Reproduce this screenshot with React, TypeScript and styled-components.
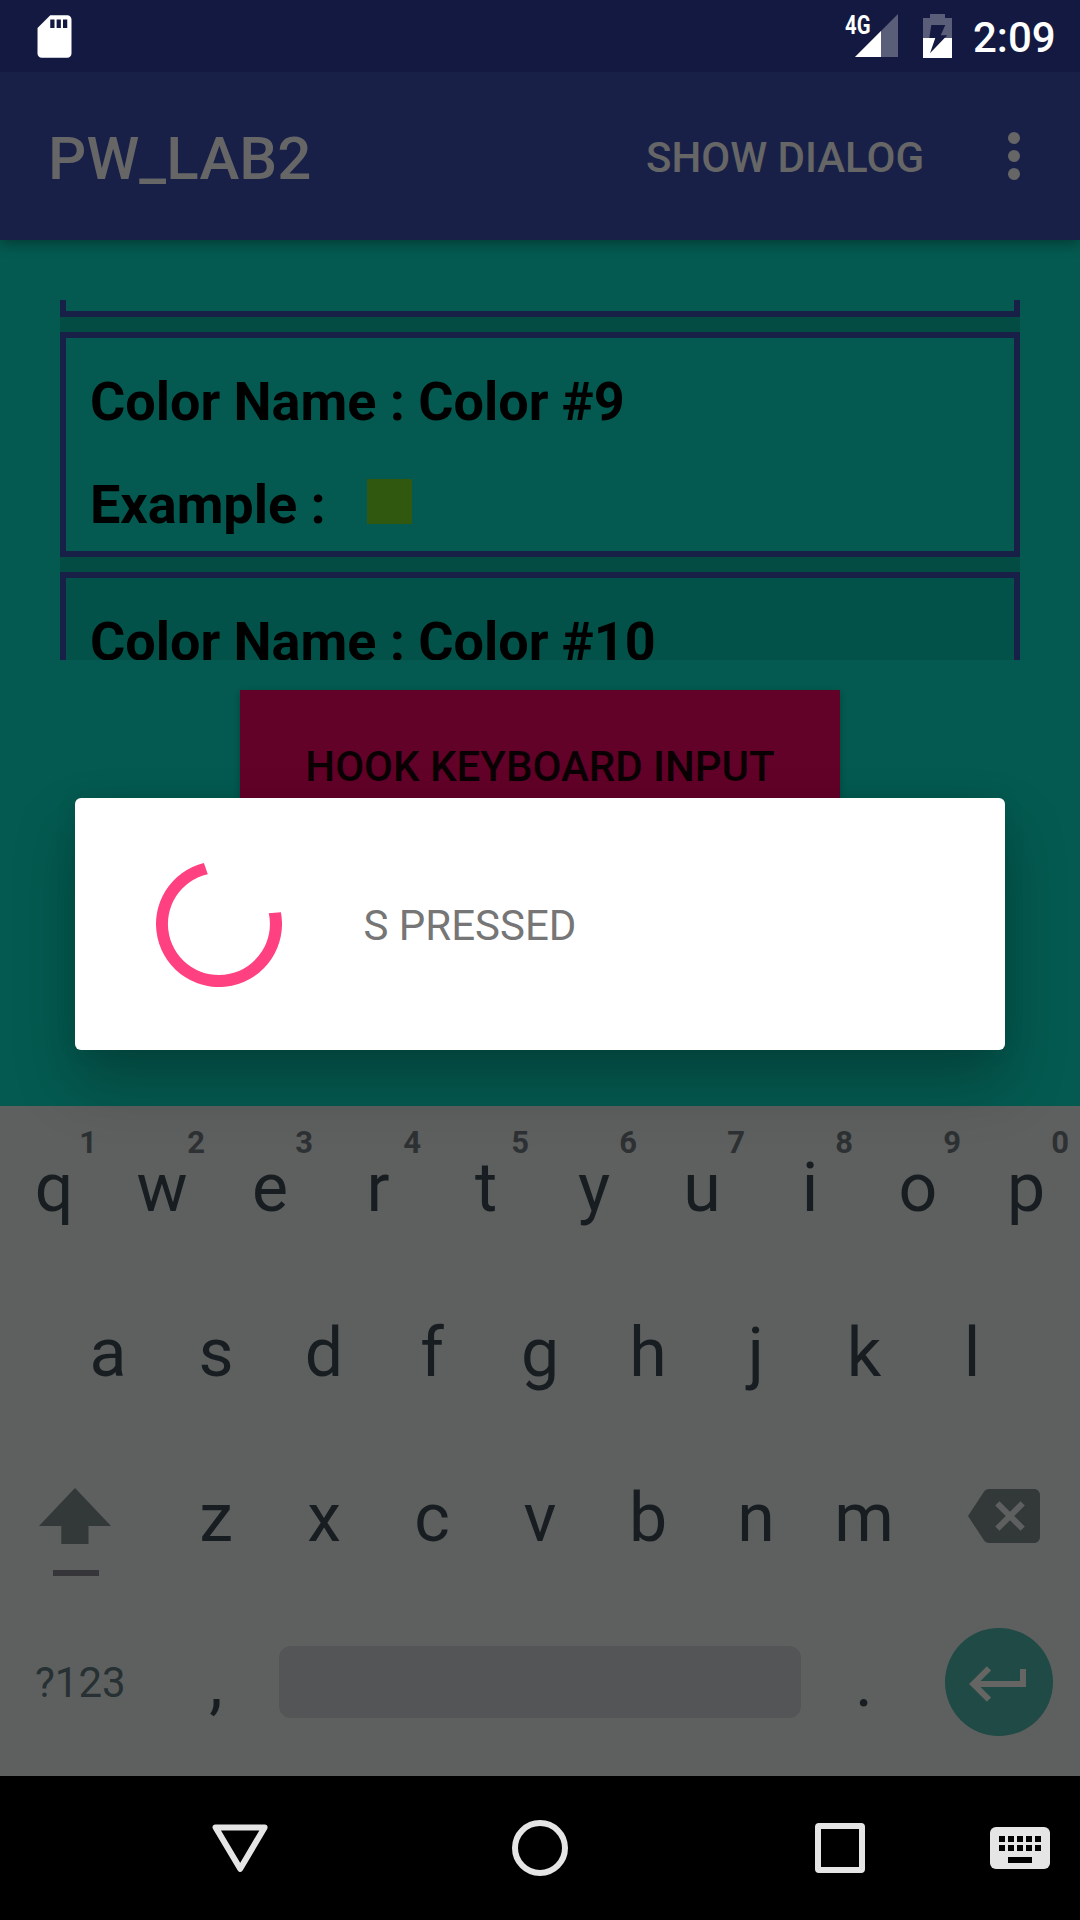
import React from "react";
import styled, { createGlobalStyle } from "styled-components";

const GlobalStyle = createGlobalStyle`
  *, *::before, *::after { box-sizing: border-box; }
  html, body { margin: 0; padding: 0; background: #000; }
  body { font-family: Roboto, "Liberation Sans", sans-serif; }
`;

const Screen = styled.div`
  position: relative;
  display: flex;
  flex-direction: column;
  width: 1080px;
  height: 1920px;
  overflow: hidden;
`;

const StatusBar = styled.header`
  display: flex;
  align-items: flex-start;
  justify-content: space-between;
  height: 72px;
  padding: 0 25px 0 28.5px;
  background: #131940;
  color: #fff;
`;

const SdIcon = styled.svg`
  width: 51px;
  height: 51px;
  margin-top: 10.5px;
`;

const StatusRight = styled.div`
  display: flex;
  align-items: flex-start;
`;

const NetworkType = styled.span`
  width: 26px;
  margin: 10px -16px 0 0;
  font-size: 26px;
  line-height: 30px;
  font-weight: 700;
  transform: scaleX(0.78);
  transform-origin: left;
`;

const SignalIcon = styled.svg`
  width: 43px;
  height: 43px;
  margin: 14px 25px 0 0;
`;

const BatteryIcon = styled.svg`
  width: 29px;
  height: 44px;
  margin: 14px 21px 0 0;
`;

const Clock = styled.span`
  width: 82px;
  margin-top: 13px;
  font-size: 42px;
  line-height: 50px;
  font-weight: 500;
  white-space: nowrap;
`;

const Toolbar = styled.div`
  position: relative;
  z-index: 1;
  display: flex;
  align-items: center;
  height: 168px;
  padding: 0 48px;
  background: #192048;
  color: #666;
  box-shadow: 0 4px 12px rgba(0, 0, 0, 0.32);
  clip-path: inset(0 0 -30px 0);
`;

const Title = styled.h1`
  flex: 1;
  margin: 0;
  padding-top: 5px;
  font-size: 60px;
  line-height: 70px;
  font-weight: 500;
  letter-spacing: 0.12px;
`;

const MenuAction = styled.span`
  padding-top: 4px;
  font-size: 42px;
  line-height: 50px;
  font-weight: 500;
`;

const OverflowIcon = styled.svg`
  width: 12px;
  height: 48px;
  margin: 0 12px 0 84px;
`;

const Content = styled.main`
  display: flex;
  flex-direction: column;
  align-items: center;
  height: 866px;
  padding: 60px;
  gap: 30px;
  background: #045a50;
`;

const ColorList = styled.div`
  display: flex;
  flex-direction: column;
  gap: 15px;
  width: 960px;
  height: 360px;
  flex: none;
  overflow: hidden;
  background: #034c43;
`;

const Card = styled.section<{ $dim?: boolean }>`
  display: flex;
  flex-direction: column;
  flex: none;
  gap: 40px;
  height: 225px;
  padding: 32px 24px 0;
  border: 6px solid #192048;
  background: ${(p) => (p.$dim ? "#035249" : "#045a50")};
`;

const CardTail = styled.div`
  flex: none;
  height: 17px;
  border: 6px solid #192048;
  border-top: 0;
  background: #045a50;
`;

const CardLine = styled.div`
  display: flex;
  font-size: 54px;
  line-height: 63px;
  font-weight: 700;
  letter-spacing: -0.04px;
  color: #000;
  white-space: nowrap;
`;

const Swatch = styled.span`
  width: 45px;
  height: 45px;
  margin: 6px 0 0 41px;
  background: #30580f;
`;

const HookButton = styled.button`
  flex: none;
  width: 600px;
  height: 153px;
  padding: 0;
  border: 0;
  background: #620228;
  color: #0a0004;
  font: 500 42px/50px Roboto, sans-serif;
  box-shadow: 0 2px 6px rgba(0, 0, 0, 0.25);
`;

const Keyboard = styled.div`
  height: 670px;
  padding-top: 3px;
  background: #5e605f;
  color: #171d20;
`;

const KeyRow = styled.div`
  display: flex;
  justify-content: center;
  height: 165px;
`;

const Key = styled.div`
  position: relative;
  display: flex;
  justify-content: center;
  width: 108px;
  padding-top: 39px;
  font-size: 68px;
  line-height: 80px;
`;

const Hint = styled.span`
  position: absolute;
  top: 14px;
  right: 11px;
  font-size: 31px;
  line-height: 40px;
  font-weight: 700;
  color: #2e3133;
`;

const ModeKey = styled.div`
  width: 162px;
  padding: 54px 0 0 35px;
  font-size: 42px;
  line-height: 50px;
  color: #273032;
`;

const SpaceWrap = styled.div`
  width: 540px;
  padding: 42px 9px 0;
`;

const SpaceBar = styled.div`
  height: 72px;
  border-radius: 12px;
  background: #545557;
`;

const ShiftIcon = styled.svg`
  width: 72px;
  height: 90px;
  margin: 49px 51px 0 39px;
`;

const BackspaceIcon = styled.svg`
  width: 72px;
  height: 54px;
  margin: 50px 40px 0 50px;
`;

const EnterKey = styled.div`
  display: flex;
  align-items: center;
  justify-content: center;
  width: 108px;
  height: 108px;
  margin: 24px 27px 0;
  border-radius: 50%;
  background: #1f4a45;
`;

const NavBar = styled.nav`
  display: flex;
  align-items: center;
  height: 144px;
  padding-left: 212px;
  background: #000;
`;

const NavIcon = styled.svg<{ $after: number }>`
  width: 60px;
  height: 60px;
  margin-right: ${(p) => p.$after}px;
`;

const Dialog = styled.div`
  position: absolute;
  z-index: 2;
  top: 798px;
  left: 75px;
  display: flex;
  align-items: center;
  width: 930px;
  height: 252px;
  padding-left: 81px;
  border-radius: 6px;
  background: #fff;
  box-shadow: 0 32px 60px rgba(0, 0, 0, 0.25), 0 0 24px rgba(0, 0, 0, 0.06);
`;

const Spinner = styled.svg`
  width: 126px;
  height: 126px;
  margin-right: 81.5px;
`;

const Message = styled.p`
  margin: 4px 0 0;
  font-size: 42px;
  line-height: 50px;
  color: #767676;
`;

const TOP_KEYS = "qwertyuiop".split("");
const HOME_KEYS = "asdfghjkl".split("");
const BOTTOM_KEYS = "zxcvbnm".split("");

export default function App() {
  return (
    <>
      <GlobalStyle />
      <Screen>
        <StatusBar>
          <SdIcon viewBox="0 0 24 24" fill="#fff">
            <path d="M18 2h-8L4.02 8 4 20c0 1.1.9 2 2 2h12c1.1 0 2-.9 2-2V4c0-1.1-.9-2-2-2zm-6 6h-2V4h2v4zm3 0h-2V4h2v4zm3 0h-2V4h2v4z" />
          </SdIcon>
          <StatusRight>
            <NetworkType>4G</NetworkType>
            <SignalIcon viewBox="0 0 43 43">
              <path d="M43 0V43H0Z" fill="#fff" fillOpacity="0.3" />
              <path d="M26 17V43H0Z" fill="#fff" />
            </SignalIcon>
            <BatteryIcon viewBox="0 0 29 44" fill="#fff">
              <path
                fillOpacity="0.3"
                fillRule="evenodd"
                d="M0 4H7V0H22V4H29V24H21.6L24.3 21.3H17.7L22.3 11H8.3L6.3 24H0Z"
              />
              <path d="M0 24H12.3L7 39.3 21.6 24H29V44H0Z" />
            </BatteryIcon>
            <Clock>2:09</Clock>
          </StatusRight>
        </StatusBar>

        <Toolbar>
          <Title>PW_LAB2</Title>
          <MenuAction>SHOW DIALOG</MenuAction>
          <OverflowIcon viewBox="0 0 12 48" fill="#666">
            <circle cx="6" cy="6" r="6" />
            <circle cx="6" cy="24" r="6" />
            <circle cx="6" cy="42" r="6" />
          </OverflowIcon>
        </Toolbar>

        <Content>
          <ColorList>
            <CardTail />
            <Card>
              <CardLine>Color Name : Color #9</CardLine>
              <CardLine>
                Example :<Swatch />
              </CardLine>
            </Card>
            <Card $dim>
              <CardLine>Color Name : Color #10</CardLine>
            </Card>
          </ColorList>
          <HookButton>HOOK KEYBOARD INPUT</HookButton>
        </Content>

        <Keyboard>
          <KeyRow>
            {TOP_KEYS.map((k, i) => (
              <Key key={k}>
                {k}
                <Hint>{(i + 1) % 10}</Hint>
              </Key>
            ))}
          </KeyRow>
          <KeyRow>
            {HOME_KEYS.map((k) => (
              <Key key={k}>{k}</Key>
            ))}
          </KeyRow>
          <KeyRow>
            <ShiftIcon viewBox="0 0 72 90">
              <path d="M36 0L72 38H49.5V56H22.3V38H0Z" fill="#333938" />
              <path d="M14 82H60V88H14Z" fill="#36363a" />
            </ShiftIcon>
            {BOTTOM_KEYS.map((k) => (
              <Key key={k}>{k}</Key>
            ))}
            <BackspaceIcon viewBox="0 0 72 54">
              <path
                d="M66 0H21C19 0 17.3 1 16 2.7L0 27 16 51.3C17.3 53 19 54 21 54H66C69.3 54 72 51.3 72 48V6C72 2.7 69.3 0 66 0Z"
                fill="#333938"
              />
              <path d="M29.3 14.3L54.7 39.7M54.7 14.3L29.3 39.7" stroke="#5e605f" strokeWidth="6" />
            </BackspaceIcon>
          </KeyRow>
          <KeyRow>
            <ModeKey>?123</ModeKey>
            <Key>,</Key>
            <SpaceWrap>
              <SpaceBar />
            </SpaceWrap>
            <Key>.</Key>
            <EnterKey>
              <svg width="108" height="108" viewBox="0 0 108 108" fill="none" stroke="#656664" strokeWidth="6">
                <path d="M78 41V56H29M44 40.3L28.3 56 44 71.7" />
              </svg>
            </EnterKey>
          </KeyRow>
        </Keyboard>

        <NavBar>
          <NavIcon $after={238} viewBox="0 0 60 60" fill="none" stroke="#e5e5e5" strokeWidth="6" strokeLinejoin="round">
            <path d="M3.6 9.4H52.6L28.2 50.8Z" />
          </NavIcon>
          <NavIcon $after={240} viewBox="0 0 60 60" fill="none" stroke="#e5e5e5" strokeWidth="6">
            <circle cx="30" cy="30" r="25" />
          </NavIcon>
          <NavIcon $after={120} viewBox="0 0 60 60" fill="#e5e5e5" fillRule="evenodd">
            <path d="M9 5H51A4 4 0 0 1 55 9V51A4 4 0 0 1 51 55H9A4 4 0 0 1 5 51V9A4 4 0 0 1 9 5ZM11 11V49H49V11Z" />
          </NavIcon>
          <NavIcon $after={0} viewBox="0 0 60 60">
            <rect y="9" width="60" height="42" rx="6" fill="#e5e5e5" />
            {[18, 27].map((y) =>
              [9, 18, 27, 36, 45].map((x) => <rect key={`${x}-${y}`} x={x} y={y} width="6" height="6" />)
            )}
            <rect x="18" y="39" width="24" height="6" />
          </NavIcon>
        </NavBar>

        <Dialog>
          <Spinner viewBox="0 0 126 126">
            <path
              d="M47.9 1.9A63 63 0 1 0 124.9 51.3L112.8 52.3A51 51 0 1 1 51.8 13.2Z"
              fill="#ff4081"
            />
          </Spinner>
          <Message>S PRESSED</Message>
        </Dialog>
      </Screen>
    </>
  );
}
